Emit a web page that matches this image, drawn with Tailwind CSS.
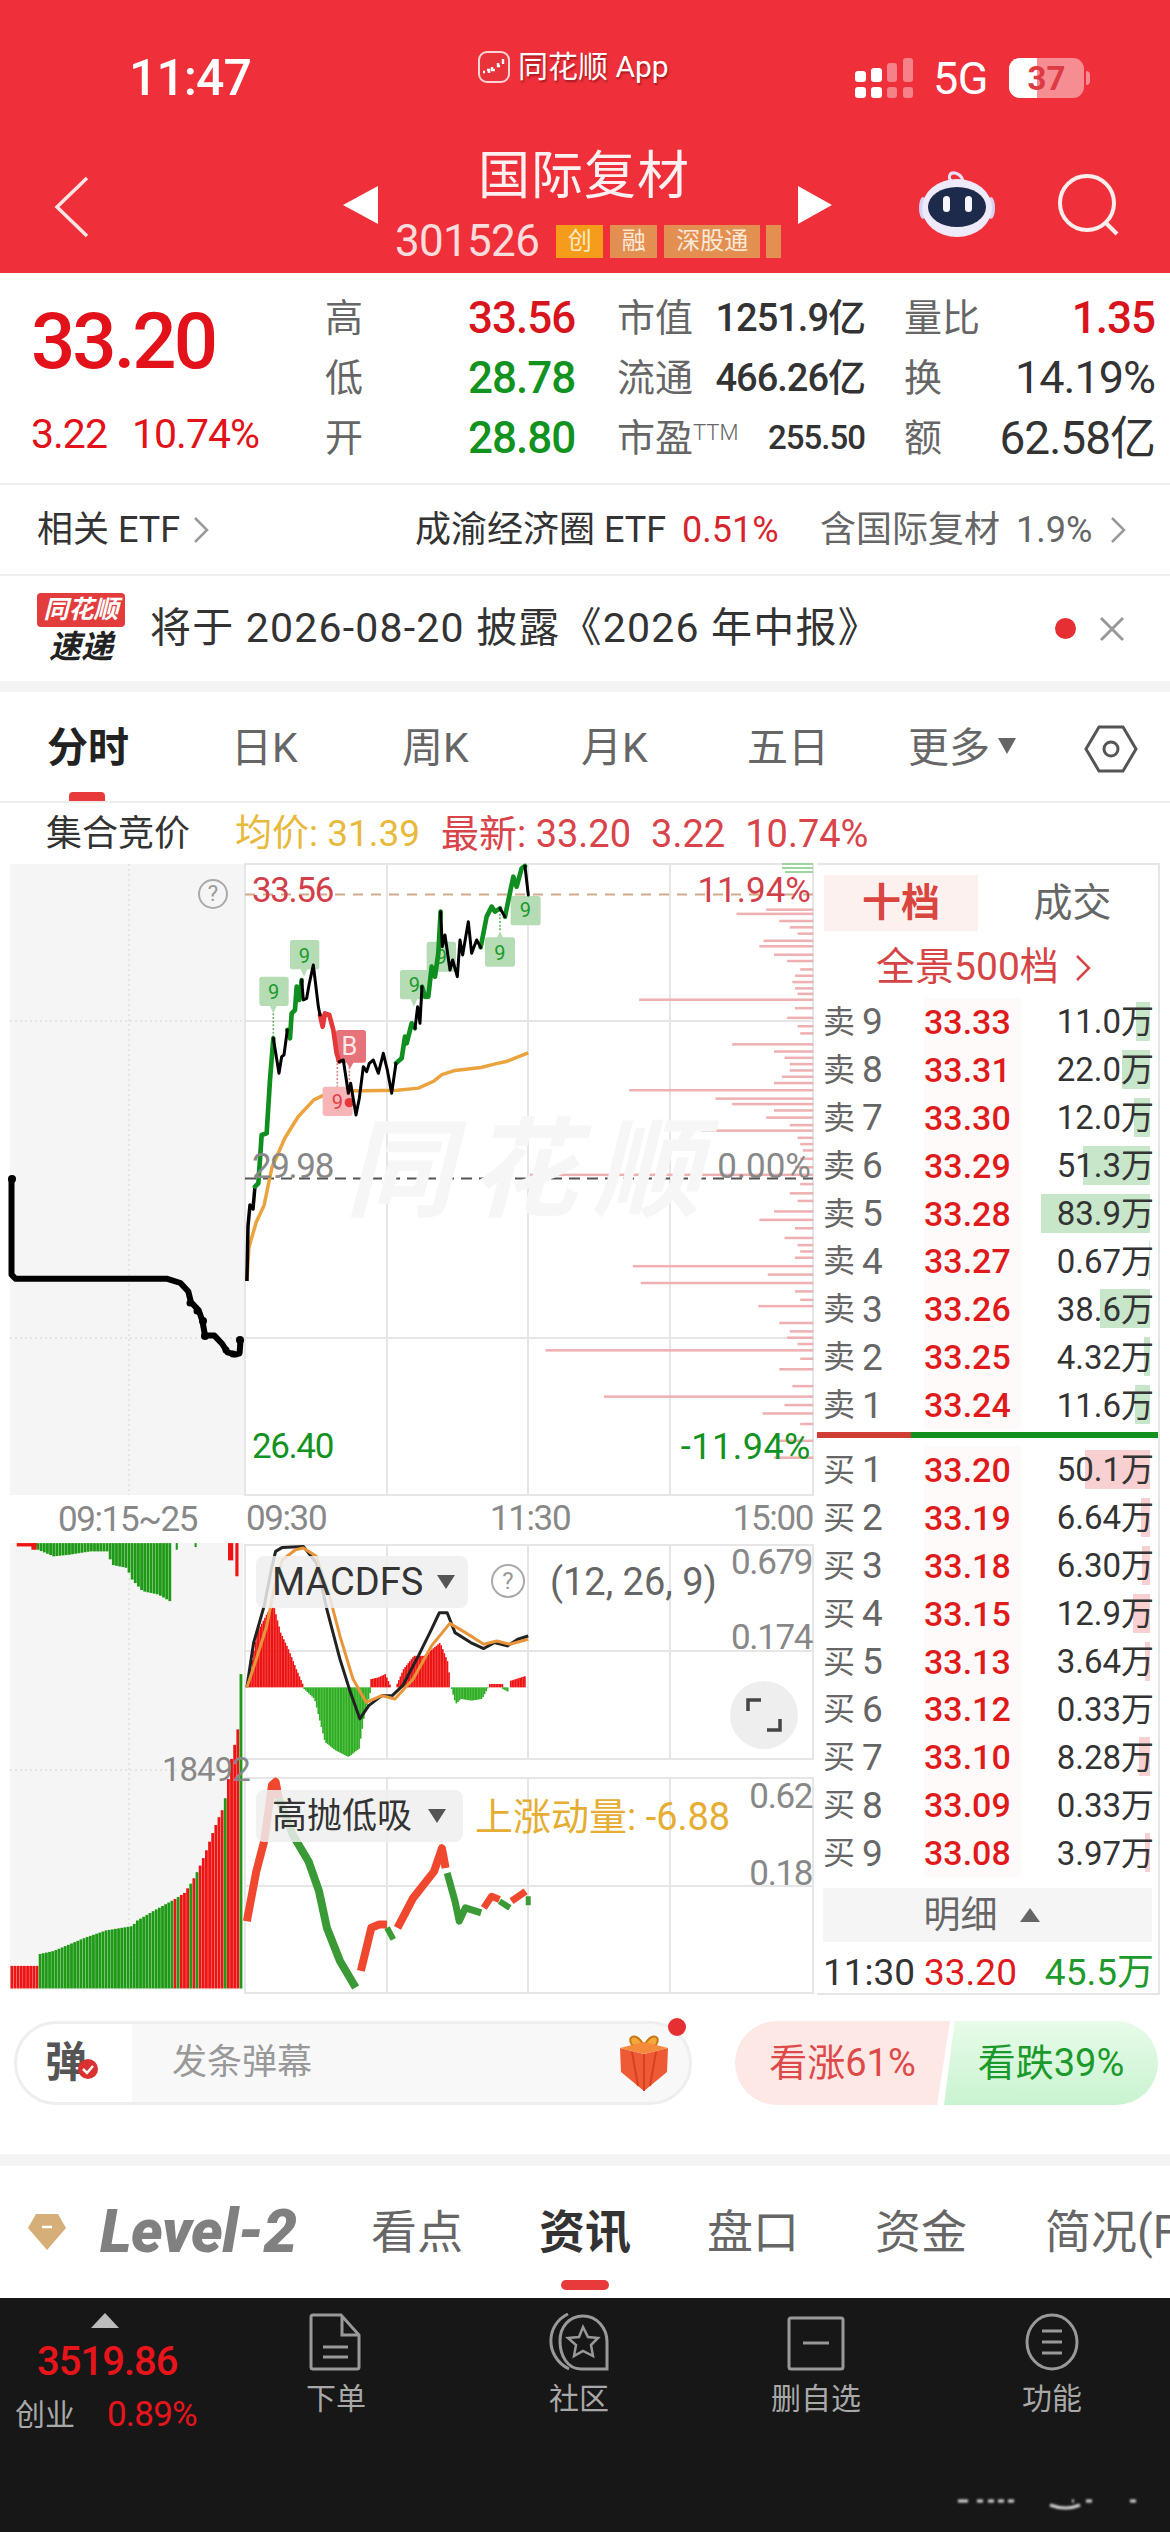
<!DOCTYPE html>
<html lang="en">
<head>
<meta charset="UTF-8">
<title>国际复材</title>
<script src="https://cdn.jsdelivr.net/npm/@tailwindcss/browser@4"></script>
</head>
<body class="bg-white">
<div class="w-[1170px] h-[2532px] overflow-hidden bg-white text-[#333] font-['Roboto','Noto_Sans_CJK_SC',sans-serif]">

  <!-- red header -->
  <header class="h-[273px] bg-[#ef303b] text-white">
    <div class="flex h-[136px] items-center pt-[20px]">
      <div class="w-[478px] pl-[129px] text-[50px] font-medium leading-none tracking-[-1px]">11:47</div>
      <div class="flex w-[376px] items-center gap-[8px] mb-[22px]">
        <svg width="32" height="32" viewBox="0 0 32 32"><rect x="1" y="1" width="30" height="30" rx="8" fill="#e8333b" stroke="#fbd5d5" stroke-width="2"/><path d="M5 21h2M9 19h2v3M14 16v3h3M20 12v3h2M25 8v5" stroke="#fff" stroke-width="2.4" fill="none"/></svg>
        <span class="text-[30px] leading-none [text-shadow:1px_2px_2px_rgba(90,0,0,.5)]">同花顺 App</span>
      </div>
      <svg width="60" height="42" viewBox="0 0 60 42" class="mr-[19px]">
        <g fill="#fff"><rect x="1" y="14" width="11" height="11" rx="3"/><rect x="1" y="30" width="11" height="11" rx="3"/><rect x="17" y="11" width="11" height="14" rx="3"/><rect x="17" y="30" width="11" height="11" rx="3"/></g>
        <g fill="#fff" fill-opacity=".4"><rect x="33" y="6" width="10" height="19" rx="3"/><rect x="33" y="30" width="10" height="11" rx="3"/><rect x="49" y="1" width="10" height="24" rx="3"/><rect x="49" y="30" width="10" height="11" rx="3"/></g>
      </svg>
      <div class="w-[76px] text-[45px] leading-none tracking-[-.5px]">5G</div>
      <div class="relative h-[40px] w-[75px] overflow-hidden rounded-[11px] bg-white/45">
        <div class="h-full w-[28px] bg-white"></div>
        <div class="absolute inset-0 flex items-center justify-center text-[33px] font-bold leading-none text-[#dd3a44]">37</div>
      </div>
      <div class="ml-[2px] h-[14px] w-[4px] rounded-r-full bg-white/45"></div>
    </div>
    <div class="flex h-[137px]">
      <div class="w-[343px] pl-[54px] pt-[40px]">
        <svg width="36" height="62" viewBox="0 0 36 62" fill="none" stroke="#fbe4e4" stroke-width="3.5"><path d="M33 2 3 31l30 29"/></svg>
      </div>
      <svg width="35" height="38" viewBox="0 0 35 38" class="mt-[50px]"><path d="M35 0v38L0 19z" fill="#fff"/></svg>
      <div class="flex w-[420px] flex-col items-start">
        <div class="w-full pr-[8px] pt-[11px] text-center text-[52px] leading-[60px] tracking-[1px] text-[#fdf0f0]">国际复材</div>
        <div class="mt-[12px] flex h-[44px] items-center pl-[17px]">
          <span class="mr-[17px] shrink-0 text-[44px] leading-none tracking-[-.7px] text-[#fbdcdc]">301526</span>
          <span class="flex h-[33px] w-[47px] shrink-0 items-center justify-center bg-[#f59c1a] text-[24px] text-[#fbe9c8]">创</span>
          <span class="ml-[7px] flex h-[33px] w-[47px] shrink-0 items-center justify-center bg-[#e48f52] text-[24px] text-[#fbe9d8]">融</span>
          <span class="ml-[7px] flex h-[33px] w-[96px] shrink-0 items-center justify-center bg-[#e48f52] text-[24px] text-[#fbe9d8]">深股通</span>
          <span class="ml-[6px] h-[33px] w-[15px] shrink-0 bg-[#e48f52]"></span>
        </div>
      </div>
      <svg width="34" height="38" viewBox="0 0 34 38" class="mt-[50px]"><path d="M0 0v38l34-19z" fill="#fff"/></svg>
      <svg width="78" height="68" viewBox="0 0 78 68" class="ml-[86px] mt-[34px]">
        <path d="M35 12c-6-3-4-10 2-9 4 1 7 3 8 8" fill="none" stroke="#eadff5" stroke-width="3"/>
        <ellipse cx="5" cy="38" rx="4" ry="11" fill="#d8d2f2"/><ellipse cx="73" cy="38" rx="4" ry="11" fill="#d8d2f2"/>
        <ellipse cx="39" cy="38" rx="35" ry="29" fill="#eeeaf9"/>
        <ellipse cx="39" cy="37" rx="29" ry="20" fill="#1d2a4c"/>
        <rect x="25" y="26" width="7" height="16" rx="3.5" fill="#f6f4ff"/><rect x="47" y="26" width="7" height="16" rx="3.5" fill="#f6f4ff"/>
      </svg>
      <svg width="64" height="64" viewBox="0 0 64 64" class="ml-[62px] mt-[38px]" fill="none" stroke="#fdeeee" stroke-width="4"><circle cx="29" cy="29" r="27"/><path d="m47 48 12 12"/></svg>
    </div>
  </header>

  <!-- price summary -->
  <section class="flex h-[210px] whitespace-nowrap">
    <div class="w-[325px] pl-[31px] text-[#e2111a]">
      <div class="mt-[31px] text-[78px] font-medium leading-[76px] tracking-[-3px]">33.20</div>
      <div class="mt-[34px] flex text-[41px] leading-[40px] tracking-[-1px]"><span class="w-[101px]">3.22</span><span>10.74%</span></div>
    </div>
    <div class="flex flex-col pt-[15px]">
      <div class="flex h-[60px] items-center">
        <span class="w-[143px] text-[38px] text-[#666]">高</span>
        <span class="w-[149px] text-[44px] font-medium tracking-[-1px] text-[#d8141c]">33.56</span>
        <span class="w-[98px] text-[38px] text-[#666]">市值</span>
        <span class="w-[150px] text-right text-[38px] font-medium tracking-[-1px] text-[#333]">1251.9亿</span>
        <span class="ml-[39px] w-[120px] text-[38px] text-[#666]">量比</span>
        <span class="w-[131px] text-right text-[44px] font-medium tracking-[-1px] text-[#d8141c]">1.35</span>
      </div>
      <div class="flex h-[60px] items-center">
        <span class="w-[143px] text-[38px] text-[#666]">低</span>
        <span class="w-[149px] text-[44px] font-medium tracking-[-1px] text-[#12921f]">28.78</span>
        <span class="w-[98px] text-[38px] text-[#666]">流通</span>
        <span class="w-[150px] text-right text-[38px] font-medium tracking-[-1px] text-[#333]">466.26亿</span>
        <span class="ml-[39px] w-[60px] text-[38px] text-[#666]">换</span>
        <span class="w-[191px] text-right text-[45px] tracking-[-1px] text-[#333]">14.19%</span>
      </div>
      <div class="flex h-[60px] items-center">
        <span class="w-[143px] text-[38px] text-[#666]">开</span>
        <span class="w-[149px] text-[44px] font-medium tracking-[-1px] text-[#12921f]">28.80</span>
        <span class="w-[98px] text-[38px] text-[#666]">市盈<sup class="text-[22px] font-light">TTM</sup></span>
        <span class="w-[150px] text-right text-[33px] font-medium tracking-[-1px] text-[#333]">255.50</span>
        <span class="ml-[39px] w-[60px] text-[38px] text-[#666]">额</span>
        <span class="w-[191px] text-right text-[46px] tracking-[-1px] text-[#333]">62.58亿</span>
      </div>
    </div>
  </section>

  <!-- etf row -->
  <section class="flex h-[93px] items-center border-y-2 border-[#eeeeee] pl-[37px] text-[36px] text-[#333] whitespace-nowrap">
    <span class="w-[156px]">相关 ETF</span>
    <svg width="16" height="28" viewBox="0 0 16 28" fill="none" stroke="#999" stroke-width="2.5"><path d="m2 2 12 12L2 26"/></svg>
    <span class="ml-[206px] w-[267px]">成渝经济圈 ETF</span>
    <span class="w-[138px] text-[#d6252c]">0.51%</span>
    <span class="w-[196px] text-[#666]">含国际复材</span>
    <span class="w-[94px] text-[#666]">1.9%</span>
    <svg width="16" height="28" viewBox="0 0 16 28" fill="none" stroke="#999" stroke-width="2.5"><path d="m2 2 12 12L2 26"/></svg>
  </section>

  <!-- notice -->
  <section class="flex h-[105px] items-center pl-[37px]">
    <div class="mr-[25px] flex w-[88px] flex-col items-center italic">
      <div class="h-[34px] w-full rounded-[4px] bg-[#e23c3c] text-center text-[25px] font-bold leading-[34px] text-white">同花顺</div>
      <div class="mt-[2px] text-[32px] font-bold leading-[36px] text-[#222]">速递</div>
    </div>
    <span class="w-[905px] whitespace-nowrap text-[41px] tracking-[1.200px] text-[#333]">将于 2026-08-20 披露《2026 年中报》</span>
    <span class="h-[21px] w-[21px] rounded-full bg-[#e52f32]"></span>
    <svg width="26" height="26" viewBox="0 0 26 26" class="ml-[23px]" fill="none" stroke="#999" stroke-width="3"><path d="m2 2 22 22M24 2 2 24"/></svg>
  </section>
  <div class="h-[11px] bg-[#f4f4f4]"></div>

  <!-- period tabs -->
  <nav class="relative flex h-[111px] items-center border-b-2 border-[#eeeeee] pl-[47px] pt-[4px] text-[41px] text-[#666]">
    <span class="w-[184px] font-bold text-[#222]">分时</span>
    <span class="w-[171px]">日K</span>
    <span class="w-[179px]">周K</span>
    <span class="w-[166px]">月K</span>
    <span class="w-[161px]">五日</span>
    <span class="w-[90px]">更多</span>
    <svg width="18" height="16" viewBox="0 0 18 16" class="mb-[6px]"><path d="M0 0h18L9 16z" fill="#666"/></svg>
    <svg width="54" height="50" viewBox="0 0 54 50" class="ml-[68px]" fill="none" stroke="#555" stroke-width="3"><path d="M15 3h24l13 22-13 22H15L2 25z"/><circle cx="27" cy="25" r="7"/></svg>
    <span class="absolute bottom-0 left-[69px] h-[9px] w-[36px] rounded-t-[4px] bg-[#e83a3a]"></span>
  </nav>

  <!-- auction summary -->
  <section class="flex h-[60px] items-center pl-[46px] pt-[2px] text-[37px] whitespace-nowrap">
    <span class="w-[189px] text-[36px] text-[#333]">集合竞价</span>
    <span class="w-[206px] text-[#e7b93c]">均价: 31.39</span>
    <span class="text-[38px] text-[#d9434a]">最新: 33.20<span class="ml-[20px]">3.22</span><span class="ml-[20px]">10.74%</span></span>
  </section>

  <!-- chart and order book -->
  <section class="flex h-[1132px]">
    <div class="relative h-full w-[817px] shrink-0 text-[35px] leading-none">
      <svg id="chart" class="absolute inset-0" width="817" height="1132" viewBox="0 863 817 1132" fill="none">
        <rect x="10" y="864" width="235" height="631" fill="#f5f5f5"/>
        <rect x="10" y="1543" width="233" height="447" fill="#f5f5f5"/>
        <g stroke="#e6e6e6" stroke-width="2">
          <path d="M245 864H813V1495H245ZM245 1021H813M245 1338H813M387 864V1495M528 864V1495M670 864V1495"/>
          <path d="M245 1545H813V1759H245ZM245 1651H813M387 1545V1759M528 1545V1759M670 1545V1759"/>
          <path d="M245 1778H813V1993H245ZM245 1886H813M387 1778V1993M528 1778V1993M670 1778V1993"/>
        </g>
        <path d="M129 864V1495M10 1021H245M10 1338H245M129 1543V1990M10 1770H245" stroke="#e4e4e4" stroke-width="2" stroke-dasharray="2 3"/>
        <g id="profile" fill="#eeb0b2" transform="translate(0 860) scale(.523 .4209)"></g>
        <path d="M782 864H813M782 868H813M785 872H813" stroke="#9ed49e" stroke-width="2"/>
        <path d="M245 894.500H813" stroke="#cfa98a" stroke-width="2" stroke-dasharray="10 8"/>
        <path d="M245 1178.500H813" stroke="#555" stroke-width="2" stroke-dasharray="11 7"/>

        <!-- pre market line -->
        <g transform="translate(0 860) scale(.523 .4209)" stroke="#000" fill="none">
          <polyline vector-effect="non-scaling-stroke" stroke-width="6" stroke-linejoin="round" points="22,757 22,985 30,995 320,995 345,1005 360,1025 365,1050 380,1070 387,1095 392,1130 410,1130 425,1150 435,1170 450,1175 458,1172 460,1140"/>
        </g>
        <g fill="#000"><circle cx="12" cy="1179" r="4"/><circle cx="240" cy="1340" r="4"/><circle cx="203" cy="1321" r="4"/><circle cx="205" cy="1336" r="4"/><circle cx="190" cy="1303" r="3.500"/><circle cx="197" cy="1311" r="3.500"/><circle cx="226" cy="1350" r="3.500"/><circle cx="233" cy="1354" r="3.500"/></g>

        <!-- average line -->
        <g transform="translate(0 860) scale(.523 .4209)">
          <polyline vector-effect="non-scaling-stroke" stroke="#eba33e" stroke-width="3.500" stroke-linejoin="round" points="472,1000 476,920 490,860 505,820 520,730 545,660 570,610 600,570 625,555 660,548 700,548 760,547 800,542 830,525 845,510 870,500 920,493 945,485 970,478 1010,458"/>
        </g>

        <!-- signal tags that sit behind the price line -->
        <g transform="translate(230 860) scale(.3333)" font-size="60" font-family="Roboto">
          <g fill="#b6dcb6">
            <path d="M96 350h72a8 8 0 0 1 8 8v72a8 8 0 0 1-8 8h-28l-10 22-10-22H96a8 8 0 0 1-8-8v-72a8 8 0 0 1 8-8z"/>
            <path d="M188 240h72a8 8 0 0 1 8 8v72a8 8 0 0 1-8 8h-28l-10 22-10-22h-24a8 8 0 0 1-8-8v-72a8 8 0 0 1 8-8z"/>
            <path d="M518 330h72a8 8 0 0 1 8 8v72a8 8 0 0 1-8 8h-28l-10 22-10-22h-24a8 8 0 0 1-8-8v-72a8 8 0 0 1 8-8z"/>
            <rect x="590" y="245" width="88" height="90" rx="8"/>
            <path d="M773 232h28l9-18 9 18h28a8 8 0 0 1 8 8v72a8 8 0 0 1-8 8h-74a8 8 0 0 1-8-8v-72a8 8 0 0 1 8-8z"/>
            <rect x="842" y="108" width="90" height="88" rx="8"/>
          </g>
          <path d="M130 460v70M810 150v64" stroke="#6ab56a" stroke-width="5" stroke-dasharray="6 5"/>
          <path d="M322 610v70M358 610v70" stroke="#d88" stroke-width="5" stroke-dasharray="6 5"/>
          <rect x="278" y="680" width="90" height="88" rx="8" fill="#f7b5b8"/>
          <path d="M326 510h74a8 8 0 0 1 8 8v82a8 8 0 0 1-8 8h-30l-10 18-10-18h-24a8 8 0 0 1-8-8v-82a8 8 0 0 1 8-8z" fill="#e6737a"/>
          <g fill="#1a9a2a" text-anchor="middle">
            <text x="131" y="418">9</text><text x="223" y="308">9</text><text x="553" y="395">9</text><text x="634" y="312">9</text><text x="810" y="300">9</text><text x="886" y="172">9</text>
          </g>
          <text x="322" y="748" fill="#e03c44" text-anchor="middle">9</text>
          <text x="358" y="586" fill="#fde8e8" text-anchor="middle" font-size="76">B</text>
          <circle cx="358" cy="728" r="14" fill="#e5383b"/>
        </g>

        <!-- price line -->
        <path d="M246.900 1281 248 1226 250 1205 253 1209 255 1186" stroke="#000" stroke-width="3.500" stroke-linejoin="round"/>
        <g transform="translate(230 860) scale(.3333)" stroke-linejoin="round" stroke-linecap="round">
          <g stroke="#0f8f1f" stroke-width="14">
            <polyline points="75,980 85,970 95,825 110,820 120,660 130,535"/>
            <polyline points="172,510 180,535 185,460 195,450 200,380 208,420 215,360"/>
            <polyline points="498,610 515,595 525,530 530,550 545,490 555,505"/>
            <polyline points="576,380 585,410 595,410 605,320 615,350 625,280 632,155"/>
            <polyline points="752,262 770,170 785,140 795,155 810,145"/>
            <polyline points="825,170 850,50 860,80 875,25 885,18"/>
          </g>
          <polyline stroke="#e5383b" stroke-width="14" points="270,465 278,500 285,460 298,465 310,510 320,580 328,605"/>
          <g stroke="#000" stroke-width="9">
            <polyline points="130,535 147,640 155,590 162,585 172,510"/>
            <polyline points="215,360 220,420 230,415 238,370 250,315 265,440 270,465"/>
            <polyline points="328,605 340,600 355,700 362,670 378,765 388,715 400,620 410,635 418,610 430,600 445,640 460,580 472,630 485,700 498,610"/>
            <polyline points="555,505 563,440 570,490 576,380"/>
            <polyline points="632,155 637,260 645,225 660,330 668,300 682,350 690,240 698,285 715,185 725,280 740,240 752,262"/>
            <polyline points="810,145 825,170"/>
            <polyline points="885,18 895,105"/>
          </g>
        </g>

        <!-- left volume bars and macd bars -->
        <g id="bars" transform="translate(0 1500) scale(.523 .3316)"></g>

        <!-- macd lines -->
        <g transform="translate(0 1500) scale(.523 .3316)" stroke-linejoin="round">
          <polyline vector-effect="non-scaling-stroke" stroke="#222" stroke-width="3" points="472,565 485,430 505,320 520,200 527,155 540,143 580,140 605,190 625,330 650,480 670,580 688,660 705,620 730,590 750,590 770,560 800,470 825,390 840,340 855,340 870,400 900,430 925,448 945,430 970,440 990,420 1010,410"/>
          <polyline vector-effect="non-scaling-stroke" stroke="#e8953a" stroke-width="3" points="472,565 490,480 510,380 525,260 540,180 565,150 580,145 605,170 630,290 650,410 675,540 700,610 730,590 755,600 790,540 825,440 860,372 890,400 925,435 950,425 975,435 1010,420"/>
        </g>

        <!-- high low band -->
        <g transform="translate(0 1500) scale(.523 .3316)" stroke-linejoin="round">
          <g stroke="#f0482f">
            <polyline vector-effect="non-scaling-stroke" stroke-width="8" points="472,1270 490,1120 505,1030 520,860 527,850 533,900"/>
            <polyline vector-effect="non-scaling-stroke" stroke-width="8" points="690,1420 710,1290 725,1280 740,1280"/>
            <polyline vector-effect="non-scaling-stroke" stroke-width="8" points="760,1290 790,1200 830,1120 845,1050 852,1110"/>
            <polyline vector-effect="non-scaling-stroke" stroke-width="7" points="925,1230 940,1195 955,1205"/>
            <polyline vector-effect="non-scaling-stroke" stroke-width="7" points="978,1210 1005,1180"/>
          </g>
          <g stroke="#3a9a35">
            <polyline vector-effect="non-scaling-stroke" stroke-width="8" points="533,900 560,1010 590,1090 610,1180 625,1290 650,1390 680,1470"/>
            <polyline vector-effect="non-scaling-stroke" stroke-width="6" points="740,1290 752,1325"/>
            <polyline vector-effect="non-scaling-stroke" stroke-width="7" points="855,1125 870,1210 878,1270 890,1230 920,1245"/>
            <polyline vector-effect="non-scaling-stroke" stroke-width="6" points="955,1210 975,1230"/>
            <polyline vector-effect="non-scaling-stroke" stroke-width="5" points="1010,1195 1010,1222"/>
          </g>
        </g>
      </svg>

      <!-- chart labels -->
      <span class="absolute left-[345px] top-[254px] select-none text-[108px] font-bold italic leading-none tracking-[16px] whitespace-nowrap text-[#f6f6f6]">同花顺</span>
      <span class="absolute left-[252px] top-[10px] tracking-[-1.400px] text-[#d1404a]">33.56</span>
      <span class="absolute right-[6px] top-[10px] text-[#d1404a]">11.94%</span>
      <span class="absolute left-[252px] top-[286px] tracking-[-1.400px] text-[#888]">29.98</span>
      <span class="absolute right-[6px] top-[286px] text-[#888]">0.00%</span>
      <span class="absolute left-[252px] top-[566px] tracking-[-1.400px] text-[#12921f]">26.40</span>
      <span class="absolute right-[6px] top-[566px] text-[36px] tracking-[.5px] text-[#12921f]">-11.94%</span>
      <span class="absolute left-[198px] top-[16px] flex h-[30px] w-[30px] items-center justify-center rounded-full border-2 border-[#aaa] text-[22px] text-[#999]">?</span>

      <span class="absolute left-[58px] top-[639px] tracking-[-1.400px] text-[#888]">09:15~25</span>
      <span class="absolute left-[246px] top-[638px] tracking-[-1.400px] text-[#888]">09:30</span>
      <span class="absolute left-[490px] top-[638px] tracking-[-1.400px] text-[#888]">11:30</span>
      <span class="absolute right-[4px] top-[638px] tracking-[-1.400px] text-[#888]">15:00</span>

      <div class="absolute left-[256px] top-[693px] flex h-[52px] w-[212px] items-center rounded-[8px] bg-[#efefef]/85 pl-[16px] text-[38px] text-[#333]">MACDFS
        <svg width="18" height="14" viewBox="0 0 18 14" class="ml-[14px]"><path d="M0 0h18L9 14z" fill="#555"/></svg>
      </div>
      <span class="absolute left-[491px] top-[701px] flex h-[34px] w-[34px] items-center justify-center rounded-full border-2 border-[#aaa] text-[24px] text-[#999]">?</span>
      <span class="absolute left-[550px] top-[700px] whitespace-nowrap text-[38px] text-[#666]">(12, 26, 9)</span>
      <span class="absolute right-[5px] top-[682px] tracking-[-1.400px] text-[#888]">0.679</span>
      <span class="absolute right-[5px] top-[757px] tracking-[-1.400px] text-[#888]">0.174</span>
      <div class="absolute left-[730px] top-[818px] flex h-[68px] w-[68px] items-center justify-center rounded-full bg-[#eeeeee]">
        <svg width="36" height="36" viewBox="0 0 36 36" fill="none" stroke="#444" stroke-width="3.500"><path d="M2 14V3h13M34 22v11H21"/></svg>
      </div>

      <span class="absolute left-[162px] top-[890px] text-[33px] tracking-[-1px] text-[#888]">18492</span>
      <div class="absolute left-[256px] top-[927px] flex h-[52px] w-[207px] items-center rounded-[8px] bg-[#efefef]/85 pl-[16px] text-[#333]">高抛低吸
        <svg width="18" height="14" viewBox="0 0 18 14" class="ml-[16px]"><path d="M0 0h18L9 14z" fill="#555"/></svg>
      </div>
      <span class="absolute left-[475px] top-[935px] whitespace-nowrap text-[38px] text-[#e6ad33]">上涨动量: -6.88</span>
      <span class="absolute right-[5px] top-[916px] tracking-[-1.400px] text-[#888]">0.62</span>
      <span class="absolute right-[5px] top-[993px] tracking-[-1.400px] text-[#888]">0.18</span>
    </div>

    <aside class="h-full w-[343px] border-y-2 border-r-2 border-[#e6e6e6] text-[33px] leading-none">
      <div class="flex pl-[7px] pt-[10px]">
        <div class="flex h-[56px] w-[154px] items-center justify-center bg-[#fdf1f0] text-[39px] font-bold text-[#d9453f]">十档</div>
        <div class="ml-[12px] flex h-[56px] w-[165px] items-center justify-center text-[39px] text-[#666]">成交</div>
      </div>
      <div class="flex h-[67px] items-center justify-center pt-[6px] pr-[8px] text-[39px] text-[#d64545]">全景500档
        <svg width="16" height="28" viewBox="0 0 16 28" class="ml-[16px]" fill="none" stroke="#d64545" stroke-width="2.500"><path d="m2 2 12 12L2 26"/></svg>
      </div>
      <div id="asks" class="h-[431px]"></div>
      <div class="mt-[3px] flex h-[6px]"><div class="w-[94px] bg-[#cf3e35]"></div><div class="flex-1 bg-[#14901f]"></div></div>
      <div id="bids" class="mt-[8px] h-[431px]"></div>
      <div class="mx-[6px] mt-[11px] flex h-[54px] items-center justify-center gap-[22px] bg-[#f5f5f5] pr-[12px] text-[37px] text-[#666]">明细
        <svg width="20" height="14" viewBox="0 0 20 14"><path d="M10 0 20 14H0z" fill="#666"/></svg>
      </div>
      <div class="flex h-[50px] items-center pl-[6px] pt-[10px] text-[37px]">
        <span class="w-[101px] text-[#333]">11:30</span>
        <span class="w-[100px] text-[#e01a1a]">33.20</span>
        <span class="w-[130px] text-right text-[#1d9a2b]">45.5万</span>
      </div>
    </aside>
  </section>

  <!-- danmu and vote -->
  <section class="flex h-[159px] pt-[26px]">
    <div class="relative ml-[14px] flex h-[84px] w-[678px] items-center overflow-visible rounded-full border-[3px] border-[#eeeeee] bg-[linear-gradient(90deg,#fff_0,#fff_115px,#f8f8f8_115px)]">
      <div class="relative w-[155px] pl-[28px] text-[42px] font-bold leading-none text-[#555]">弹
        <svg width="22" height="22" viewBox="0 0 22 22" class="absolute left-[60px] top-[16px]"><circle cx="11" cy="11" r="10" fill="#d93030"/><path d="m6 11 4 4 6-7" fill="none" stroke="#fff" stroke-width="2.500"/></svg>
      </div>
      <span class="text-[35px] text-[#999]">发条弹幕</span>
      <svg width="52" height="58" viewBox="0 0 52 58" class="ml-[306px]">
        <path d="M25 10C18-2 8 2 14 11c2 2 7 3 11 3zM27 10c7-12 17-8 11 1-2 2-7 3-11 3z" fill="#f2a93a" stroke="#c77812" stroke-width="2"/>
        <path d="M2 14 26 20 50 14 49 38 26 57 3 38z" fill="#ee5a36"/><path d="M2 14 26 20 50 14 26 8z" fill="#f48a3c"/><path d="M26 20V57M14 18l6 34M38 18l-6 34" stroke="#d8401f" stroke-width="2"/>
      </svg>
      <span class="absolute right-[3px] top-[-6px] h-[18px] w-[18px] rounded-full bg-[#e52f32]"></span>
    </div>
    <div class="ml-[43px] flex h-[84px] w-[423px]">
      <div class="flex w-[215px] items-center justify-center rounded-l-[42px] bg-[#fde8e6] text-[38px] text-[#de4a4a] [clip-path:polygon(0_0,100%_0,94%_100%,0_100%)]">看涨61%</div>
      <div class="ml-[-6px] flex w-[214px] items-center justify-center rounded-r-[42px] bg-[linear-gradient(180deg,#e8fbe9,#c9f3d0)] text-[38px] text-[#1b9a2b] [clip-path:polygon(5%_0,100%_0,100%_100%,0_100%)]">看跌39%</div>
    </div>
  </section>
  <div class="h-[12px] bg-[#f4f4f4]"></div>

  <!-- news tabs -->
  <nav class="relative flex h-[132px] items-center overflow-hidden whitespace-nowrap text-[46px] text-[#666]">
    <svg width="40" height="38" viewBox="0 0 40 38" class="ml-[27px] shrink-0"><path d="M9 1h22l8 14-19 22L1 15z" fill="#d6ae78"/><path d="M15 14h10" stroke="#fff" stroke-width="2.500"/></svg>
    <span class="ml-[33px] w-[271px] shrink-0 text-[60px] font-black italic tracking-[-.5px] text-[#808080]">Level-2</span>
    <span class="w-[168px] shrink-0">看点</span>
    <span class="w-[168px] shrink-0 font-bold text-[#333]">资讯</span>
    <span class="w-[168px] shrink-0">盘口</span>
    <span class="w-[170px] shrink-0">资金</span>
    <span class="shrink-0">简况(F10)</span>
    <span class="absolute left-[561px] top-[114px] h-[10px] w-[48px] rounded-[5px] bg-[#e83a3a]"></span>
  </nav>

  <!-- dark bottom bar -->
  <footer class="relative flex h-[234px] bg-[#171717] text-[30px] leading-none text-[#a8a8a8]">
    <div class="flex w-[276px] flex-col pl-[15px]">
      <svg width="28" height="15" viewBox="0 0 28 15" class="ml-[76px] mt-[15px]"><path d="M14 0 28 15H0z" fill="#bbb"/></svg>
      <div class="ml-[22px] mt-[14px] text-[40px] font-medium tracking-[-1px] text-[#e8141c]">3519.86</div>
      <div class="mt-[15px] flex items-center"><span class="w-[92px]">创业</span><span class="text-[35px] tracking-[-.8px] text-[#e8141c]">0.89%</span></div>
    </div>
    <div class="flex w-[120px] flex-col items-center pt-[15px]">
      <svg width="56" height="58" viewBox="0 0 56 58" fill="none" stroke="#999" stroke-width="3"><path d="M5 2h28l18 20v32q0 2-2 2H5q-2 0-2-2V4q0-2 2-2zM34 3v19h17M15 34h25M15 44h25"/></svg>
      <span class="mt-[13px]">下单</span>
    </div>
    <div class="ml-[123px] flex w-[120px] flex-col items-center pt-[15px]">
      <svg width="60" height="58" viewBox="0 0 60 58" fill="none" stroke="#999" stroke-width="3"><path d="M20 56C-4 44-4 12 19 1"/><path d="M58 56H32C18 56 11 42 11 28 11 14 20 3 34 3c14 0 24 12 24 26z"/><path d="m34 14 5 10 10 1-7 7 2 11-10-5-9 5 2-11-8-7 11-1z" stroke-width="2.500"/></svg>
      <span class="mt-[13px]">社区</span>
    </div>
    <div class="ml-[117px] flex w-[120px] flex-col items-center pt-[15px]">
      <svg width="58" height="58" viewBox="0 0 58 58" fill="none" stroke="#999" stroke-width="3"><rect x="2" y="5" width="54" height="51" rx="2"/><path d="M16 30h26"/></svg>
      <span class="mt-[13px]">删自选</span>
    </div>
    <div class="ml-[116px] flex w-[120px] flex-col items-center pt-[15px]">
      <svg width="54" height="58" viewBox="0 0 54 58" fill="none" stroke="#999" stroke-width="3"><ellipse cx="27" cy="29" rx="25" ry="27"/><path d="M17 18h20M17 29h20M17 40h20"/></svg>
      <span class="mt-[13px]">功能</span>
    </div>
    <svg width="210" height="40" viewBox="0 0 210 40" class="absolute left-[950px] top-[176px]" fill="none" stroke="#d8d8d8" stroke-width="3">
      <path d="M8 27h10M27 27h6M38 27h6M48 27h6M58 27h6M100 31q16 6 30 0M122 27h2M136 27h6M180 27h6" class="blur-[1px]"/>
    </svg>
  </footer>
</div>

<script>
  // volume profile bars beside the price chart
  const profile = [[118,1465],[128,1408],[145,1490],[160,1510],[175,1525],[192,1460],[205,1452],[225,1480],[240,1505],[260,1530],[275,1520],[290,1515],[305,1520],[318,1525],[332,1222],[352,1520],[375,1505],[395,1525],[412,1530],[438,1400],[455,1480],[470,1500],[485,1510],[500,1510],[515,1495],[530,1480],[547,1203],[567,1368],[580,1400],[595,1480],[612,1465],[630,1510],[643,1340],[660,1525],[675,1530],[690,1535],[710,1530],[730,1520],[748,1013],[770,1530],[792,1510],[810,1525],[835,1480],[855,1452],[875,1520],[898,1500],[915,1525],[930,1530],[945,1520],[965,1210],[985,1468],[1005,1225],[1025,1520],[1045,1530],[1060,1450],[1100,1490],[1120,1510],[1135,1505],[1150,1525],[1165,1043],[1185,1530],[1210,1490],[1250,1515],[1275,1155],[1295,1500],[1315,1458],[1340,1530],[1380,1490],[1420,1480]];
  document.getElementById('profile').innerHTML = profile.map(([y, x]) => `<rect x="${x}" y="${y - 3}" width="${1555 - x}" height="6"/>`).join('');

  function lerp(table, x) {
    for (let i = 1; i < table.length; i++) {
      if (x <= table[i][0]) {
        const [x0, y0] = table[i - 1], [x1, y1] = table[i];
        return y0 + (y1 - y0) * (x - x0) / (x1 - x0);
      }
    }
    return table[table.length - 1][1];
  }
  const RED = '#ee1414', GREEN = '#1f9a17';
  let out = '';
  const bar = (x, w, top, bottom, color) => { out += `<rect x="${x}" y="${top}" width="${w}" height="${bottom - top}" fill="${color}"/>`; };

  // left panel volume, bottom up
  const vol = [[20,1405],[70,1405],[71,1370],[100,1360],[130,1340],[160,1320],[200,1298],[250,1285],[260,1268],[290,1240],[330,1205],[350,1185],[365,1150],[378,1110],[390,1065],[405,1000],[415,960],[425,925],[432,865],[438,795],[450,710],[456,655],[458,525],[463,525]];
  for (let x = 20; x < 462; x += 6) {
    let color = RED;
    if (x >= 70 && x < 330) color = GREEN;
    if (x === 338 || x === 362 || x === 374 || x === 428 || x >= 456) color = GREEN;
    bar(x, 5.4, lerp(vol, x), 1473, color);
  }
  // left panel auction imbalance, top down
  const hang = [[70,150],[100,170],[130,165],[170,155],[205,155],[210,195],[240,205],[250,240],[270,275],[300,285],[322,305]];
  for (let x = 70; x < 324; x += 6) bar(x, 5.4, 130, lerp(hang, x), GREEN);
  bar(32, 38, 130, 140, RED); bar(60, 10, 130, 150, RED);
  bar(336, 4, 130, 150, GREEN); bar(372, 4, 130, 142, GREEN);
  bar(436, 10, 130, 182, RED); bar(450, 6, 130, 230, RED);

  // macd histogram
  const zero = 565;
  const ups = [[472,565],[490,400],[510,340],[522,320],[535,400],[550,450],[565,510],[580,565]];
  const dn1 = [[580,570],[600,600],[620,730],[640,755],[665,775],[685,750],[695,650],[708,570]];
  const up2 = [[708,540],[722,535],[735,525],[745,560]];
  const up3 = [[755,565],[770,510],[790,470],[810,470],[840,430],[855,490],[860,565]];
  const dn2 = [[862,570],[870,615],[880,600],[900,605],[920,600],[932,565]];
  const up4 = [[935,555],[960,555]];
  const up5 = [[975,545],[1005,530]];
  const hist = (t, color, above) => {
    for (let x = t[0][0]; x < t[t.length - 1][0]; x += 3) {
      const y = lerp(t, x);
      above ? bar(x, 3.2, y, zero, color) : bar(x, 3.2, zero, y, color);
    }
  };
  hist(ups, RED, true); hist(dn1, '#2fae23', false); hist(up2, RED, true); hist(up3, RED, true);
  hist(dn2, '#2fae23', false); hist(up4, RED, true); hist([[960,570],[972,580]], '#2fae23', false); hist(up5, RED, true);
  document.getElementById('bars').innerHTML = out;

  // order book rows
  const asks = [['9','33.33','11.0',14],['8','33.31','22.0',28],['7','33.30','12.0',16],['6','33.29','51.3',67],['5','33.28','83.9',109],['4','33.27','0.67',1],['3','33.26','38.6',50],['2','33.25','4.32',6],['1','33.24','11.6',15]];
  const bids = [['1','33.20','50.1',65],['2','33.19','6.64',9],['3','33.18','6.30',8],['4','33.15','12.9',17],['5','33.13','3.64',5],['6','33.12','0.33',0],['7','33.10','8.28',11],['8','33.09','0.33',0],['9','33.08','3.97',5]];
  const row = (side, barClass) => ([n, price, qty, w]) => `
    <div class="relative flex h-[47.900px] items-center pl-[6px]">
      <span class="absolute right-[8px] top-[4px] h-[39px] ${barClass}" style="width:${w}px"></span>
      <span class="relative flex w-[101px] items-center text-[#666]"><span class="w-[39px] text-[32px]">${side}</span><span class="text-[37px]">${n}</span></span>
      <span class="relative flex h-[47.900px] w-[97px] items-center bg-[#fffafa] text-[34px] font-medium text-[#e01a1a]">${price}</span>
      <span class="relative w-[133px] text-right text-[#333]">${qty}万</span>
    </div>`;
  document.getElementById('asks').innerHTML = asks.map(row('卖', 'bg-[#c8e6c9]')).join('');
  document.getElementById('bids').innerHTML = bids.map(row('买', 'bg-[#f8d0d2]')).join('');
</script>
</body>
</html>
